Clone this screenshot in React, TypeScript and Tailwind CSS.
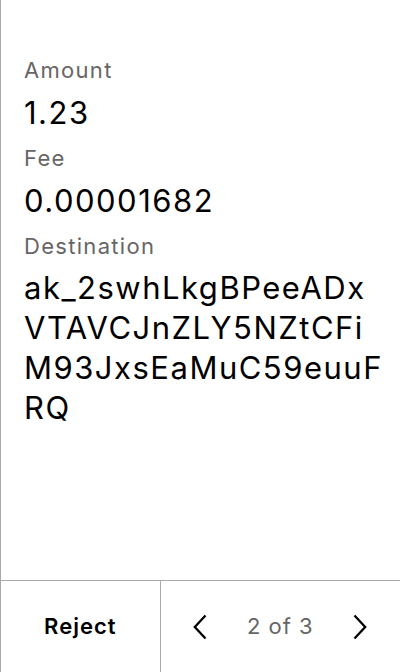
export default function App() {
  return (
    <div
      className="h-screen w-full flex flex-col bg-white border-l border-[#a9a9a9] text-black"
      style={{ fontFamily: "Inter, 'Noto Sans', sans-serif" }}
    >
      <div className="flex-1 pl-[23px] pr-4 pt-[56px]">
        <div className="text-[22px] leading-7 tracking-[1.3px] text-[#666]">Amount</div>
        <div className="mt-[9px] text-[31px] leading-10 tracking-[1.5px]">1.23</div>

        <div className="mt-[11px] text-[22px] leading-7 tracking-[1.3px] text-[#666]">Fee</div>
        <div className="mt-[9px] text-[31px] leading-10 tracking-[1.5px]">0.00001682</div>

        <div className="mt-[11px] text-[22px] leading-7 tracking-[1.3px] text-[#666]">Destination</div>
        <div className="mt-[8px] text-[31px] leading-10 tracking-[1.5px] break-all">
          ak_2swhLkgBPeeADxVTAVCJnZLY5NZtCFiM93JxsEaMuC59euuFRQ
        </div>
      </div>

      <div className="h-[92px] grid grid-cols-5 border-t border-[#a9a9a9]">
        <button className="col-span-2 border-r border-[#a9a9a9] flex items-center justify-center text-[22px] font-semibold tracking-[1px]">
          Reject
        </button>
        <button className="flex items-center justify-center">
          <svg width="14" height="26" viewBox="0 0 14 26" fill="none">
            <path d="M12.5 1.5 L1.8 13 L12.5 24.5" stroke="#000" strokeWidth="2.3" />
          </svg>
        </button>
        <div className="flex items-center justify-center text-[22px] tracking-[1px] text-[#666]">2 of 3</div>
        <button className="flex items-center justify-center">
          <svg width="14" height="26" viewBox="0 0 14 26" fill="none">
            <path d="M1.5 1.5 L12.2 13 L1.5 24.5" stroke="#000" strokeWidth="2.3" />
          </svg>
        </button>
      </div>
    </div>
  );
}
